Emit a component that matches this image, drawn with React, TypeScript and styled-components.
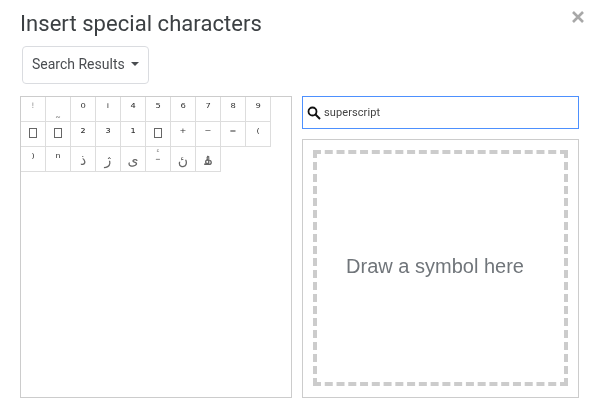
import styled, { createGlobalStyle } from "styled-components";

const GlobalStyle = createGlobalStyle`
  html, body {
    margin: 0;
    padding: 0;
    background: #fff;
  }
`;

const Dialog = styled.div`
  position: relative;
  width: 601px;
  height: 418px;
  box-sizing: border-box;
  padding: 9px 22px 0 20px;
  font-family: Roboto, "Liberation Sans", sans-serif;
  overflow: hidden;
  will-change: transform;
`;
const Title = styled.h1`
  margin: 0;
  height: 37px;
  line-height: 30px;
  font-size: 22px;
  font-weight: 400;
  letter-spacing: 0.05px;
  color: #3c4043;
`;
const CloseButton = styled.div`
  position: absolute;
  top: 11px;
  right: 17px;
  width: 12px;
  height: 12px;
  display: flex;
`;
const DropButton = styled.div`
  margin-left: 2px;
  width: 127px;
  height: 38px;
  box-sizing: border-box;
  border: 1px solid #dadce0;
  border-radius: 4px;
  display: flex;
  align-items: center;
  padding: 0 0 2px 9px;
  gap: 6px;
  font-size: 14px;
  color: #4a4d51;
`;
const Caret = styled.span`
  width: 0;
  height: 0;
  border-left: 4.5px solid transparent;
  border-right: 4.5px solid transparent;
  border-top: 4.5px solid #4a4d51;
`;
const Columns = styled.div`
  margin-top: 12px;
  display: flex;
  gap: 10px;
  align-items: flex-start;
`;
const CharPanel = styled.div`
  width: 272px;
  height: 302px;
  box-sizing: border-box;
  border: 1px solid #ccc;
`;
const CharGrid = styled.div`
  display: grid;
  grid-template-columns: repeat(10, 25px);
  grid-auto-rows: 25px;
`;
const Cell = styled.div<{ $top: number; $size: number; $tone: string }>`
  box-sizing: border-box;
  border-right: 1px solid #ddd;
  border-bottom: 1px solid #ddd;
  display: flex;
  justify-content: center;
  align-items: flex-start;
  padding-top: ${(p) => p.$top}px;
  font-family: "DejaVu Sans", "Noto Sans", sans-serif;
  font-size: ${(p) => p.$size}px;
  line-height: 14px;
  color: ${(p) => p.$tone};
`;
const Tofu = styled.span`
  box-sizing: border-box;
  width: 8px;
  height: 10px;
  margin-top: 2px;
  border: 1px solid #666;
`;
const SidePanel = styled.div`
  width: 277px;
  display: flex;
  flex-direction: column;
  gap: 10px;
`;
const SearchBox = styled.div`
  height: 33px;
  box-sizing: border-box;
  border: 1px solid #4d90fe;
  display: flex;
  align-items: center;
  padding-left: 4px;
  gap: 3px;
  font-size: 11px;
  letter-spacing: 0.1px;
  color: #444;
`;
const DrawFrame = styled.div`
  height: 259px;
  box-sizing: border-box;
  border: 1px solid #ccc;
  padding: 10px;
`;
const DrawArea = styled.div`
  height: 236px;
  box-sizing: border-box;
  border: 4px dashed #ccc;
  padding: 0 11px 4px 0;
  display: flex;
  align-items: center;
  justify-content: center;
  font-family: "Liberation Sans", Arial, sans-serif;
  font-size: 20px;
  color: #70757a;
`;

type CharItem = { c?: string; top?: number; size?: number; tone?: string };

const arabic = { top: 6, size: 14, tone: "#666" };
const faint = "#999";

const chars: CharItem[] = [
  { c: "ꜝ", tone: faint },
  { c: "˷", top: 7, tone: faint },
  { c: "⁰" },
  { c: "ⁱ" },
  { c: "⁴" },
  { c: "⁵" },
  { c: "⁶" },
  { c: "⁷" },
  { c: "⁸" },
  { c: "⁹" },
  {},
  {},
  { c: "²" },
  { c: "³" },
  { c: "¹" },
  {},
  { c: "⁺" },
  { c: "⁻" },
  { c: "⁼" },
  { c: "⁽" },
  { c: "⁾" },
  { c: "ⁿ" },
  { c: "ذ", ...arabic },
  { c: "ژ", ...arabic },
  { c: "ی", ...arabic },
  { c: "ـٔ", top: 2, tone: faint },
  { c: "ںٔ", ...arabic },
  { c: "ۿٔ", ...arabic },
];

export default function App() {
  return (
    <>
      <GlobalStyle />
      <Dialog>
        <Title>Insert special characters</Title>
        <CloseButton>
          <svg width="12" height="12" viewBox="0 0 12 12">
            <path d="M1 1L11 11M11 1L1 11" stroke="#a8a8a8" strokeWidth="2.6" />
          </svg>
        </CloseButton>
        <DropButton>
          Search Results
          <Caret />
        </DropButton>
        <Columns>
          <CharPanel>
            <CharGrid>
              {chars.map((item, i) => (
                <Cell key={i} $top={item.top ?? 4} $size={item.size ?? 13} $tone={item.tone ?? "#333"}>
                  {item.c ?? <Tofu />}
                </Cell>
              ))}
            </CharGrid>
          </CharPanel>
          <SidePanel>
            <SearchBox>
              <svg width="14" height="14" viewBox="0 0 14 14" fill="none">
                <circle cx="5.5" cy="5.5" r="4" stroke="#111" strokeWidth="1.8" />
                <path d="M8.5 8.5L13 13" stroke="#111" strokeWidth="2" />
              </svg>
              superscript
            </SearchBox>
            <DrawFrame>
              <DrawArea>Draw a symbol here</DrawArea>
            </DrawFrame>
          </SidePanel>
        </Columns>
      </Dialog>
    </>
  );
}
